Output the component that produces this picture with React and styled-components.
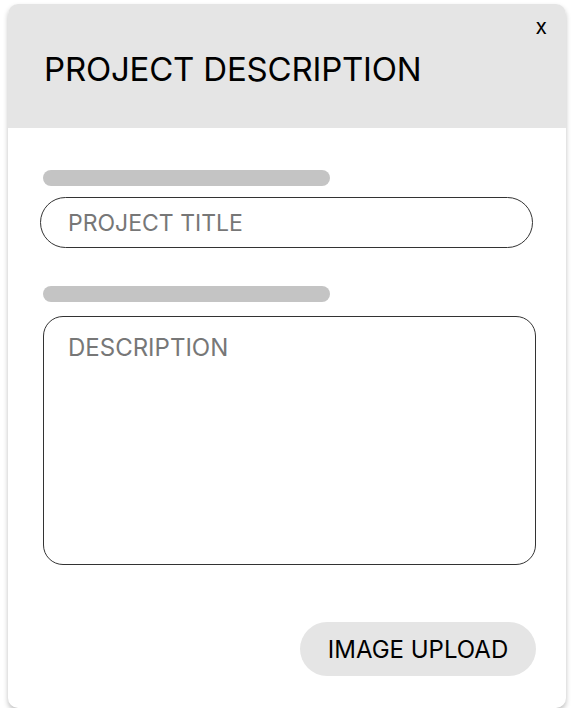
import styled, { createGlobalStyle } from "styled-components";

const GlobalStyle = createGlobalStyle`
  body {
    margin: 0;
    background: #ffffff;
    font-family: Inter, "Liberation Sans", sans-serif;
  }
`;

const Page = styled.div`
  padding: 4px 9px 0 8px;
`;

const Card = styled.div`
  position: relative;
  height: 704px;
  background: #ffffff;
  border-radius: 10px;
  overflow: hidden;
  box-shadow: 0 3px 5px rgba(0, 0, 0, 0.25);
  display: flex;
  flex-direction: column;
`;

const Header = styled.div`
  height: 124px;
  background: #e5e5e5;
  display: flex;
  align-items: center;
  padding-left: 36px;
  padding-top: 6px;
  box-sizing: border-box;
`;

const Title = styled.h1`
  margin: 0;
  font-size: 33px;
  font-weight: 400;
  letter-spacing: -0.2px;
  color: #000000;
`;

const Close = styled.button`
  position: absolute;
  top: 10px;
  right: 19px;
  background: none;
  border: none;
  padding: 0;
  font-family: inherit;
  font-size: 21px;
  color: #000000;
  cursor: pointer;
`;

const Form = styled.form`
  display: flex;
  flex-direction: column;
  align-items: flex-start;
  padding: 42px 30px 0 35px;
`;

const LabelBar = styled.div`
  width: 287px;
  height: 16px;
  border-radius: 8px;
  background: #c4c4c4;
  margin-bottom: ${(p) => p.$gap}px;
`;

const TitleInput = styled.input`
  box-sizing: border-box;
  width: 493px;
  height: 51px;
  margin-left: -3px;
  margin-bottom: 38px;
  padding: 0 27px;
  border: 1px solid #333333;
  border-radius: 26px;
  outline: none;
  font-family: inherit;
  font-size: 23px;
  color: #000;
  &::placeholder {
    color: #777777;
  }
`;

const DescInput = styled.textarea`
  box-sizing: border-box;
  width: 493px;
  height: 249px;
  padding: 16px 24px;
  border: 1px solid #333333;
  border-radius: 20px;
  outline: none;
  resize: none;
  font-family: inherit;
  font-size: 24px;
  color: #000;
  &::placeholder {
    color: #777777;
  }
`;

const Actions = styled.div`
  align-self: stretch;
  display: flex;
  justify-content: flex-end;
  margin-top: 57px;
`;

const UploadButton = styled.button`
  width: 236px;
  height: 54px;
  border: none;
  border-radius: 27px;
  background: #e5e5e5;
  font-family: inherit;
  font-size: 24px;
  color: #000;
  cursor: pointer;
`;

export default function App() {
  return (
    <Page>
      <GlobalStyle />
      <Card>
        <Header>
          <Title>PROJECT DESCRIPTION</Title>
        </Header>
        <Close type="button">x</Close>
        <Form onSubmit={(e) => e.preventDefault()}>
          <LabelBar $gap={11} />
          <TitleInput placeholder="PROJECT TITLE" />
          <LabelBar $gap={14} />
          <DescInput placeholder="DESCRIPTION" />
          <Actions>
            <UploadButton type="button">IMAGE UPLOAD</UploadButton>
          </Actions>
        </Form>
      </Card>
    </Page>
  );
}
